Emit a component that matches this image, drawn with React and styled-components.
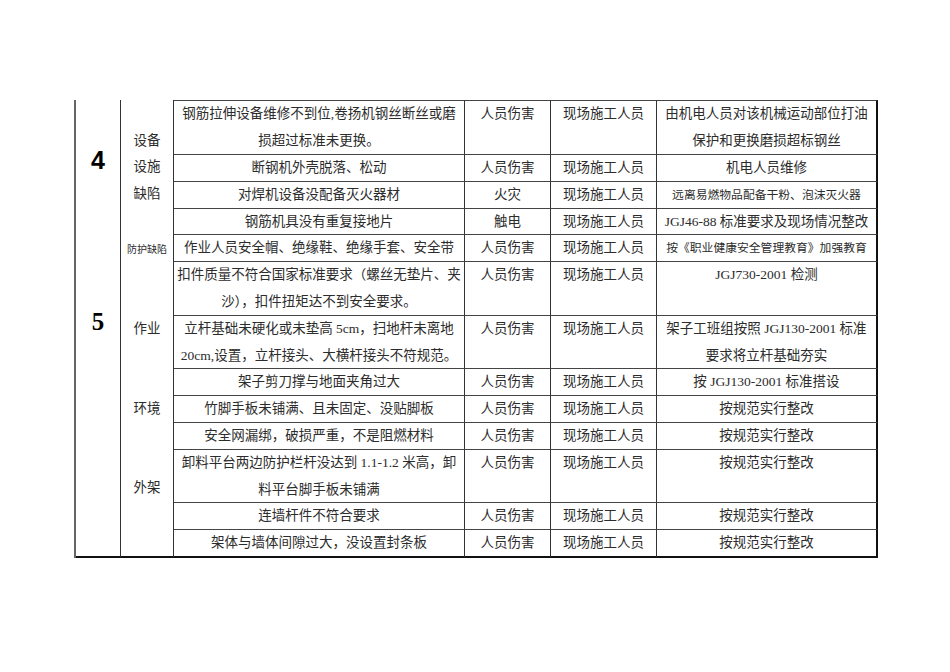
import React from 'react';
import styled, { createGlobalStyle } from 'styled-components';

const GlobalStyle = createGlobalStyle`
    html, body {
        margin: 0;
        padding: 0;
        background: #ffffff;
    }
    body {
        font-family: "Liberation Serif", "Noto Sans CJK SC", serif;
        color: #2c2c2c;
    }
`;

const rows = [
    { h: 55, issue: ['钢筋拉伸设备维修不到位,卷扬机钢丝断丝或磨', '损超过标准未更换。'], harm: '人员伤害', who: '现场施工人员', fix: ['由机电人员对该机械运动部位打油', '保护和更换磨损超标钢丝'] },
    { h: 27, issue: ['断钢机外壳脱落、松动'], harm: '人员伤害', who: '现场施工人员', fix: ['机电人员维修'] },
    { h: 27, issue: ['对焊机设备没配备灭火器材'], harm: '火灾', who: '现场施工人员', fix: ['远离易燃物品配备干粉、泡沫灭火器'], small: true },
    { h: 26, issue: ['钢筋机具没有重复接地片'], harm: '触电', who: '现场施工人员', fix: ['JGJ46-88 标准要求及现场情况整改'] },
    { h: 27, issue: ['作业人员安全帽、绝缘鞋、绝缘手套、安全带'], harm: '人员伤害', who: '现场施工人员', fix: ['按《职业健康安全管理教育》加强教育'], small: true },
    { h: 54, issue: ['扣件质量不符合国家标准要求（螺丝无垫片、夹', '沙），扣件扭矩达不到安全要求。'], harm: '人员伤害', who: '现场施工人员', fix: ['JGJ730-2001 检测'] },
    { h: 53, issue: ['立杆基础未硬化或未垫高 5cm，扫地杆未离地', '20cm,设置，立杆接头、大横杆接头不符规范。'], harm: '人员伤害', who: '现场施工人员', fix: ['架子工班组按照 JGJ130-2001 标准', '要求将立杆基础夯实'] },
    { h: 27, issue: ['架子剪刀撑与地面夹角过大'], harm: '人员伤害', who: '现场施工人员', fix: ['按 JGJ130-2001 标准搭设'] },
    { h: 27, issue: ['竹脚手板未铺满、且未固定、没贴脚板'], harm: '人员伤害', who: '现场施工人员', fix: ['按规范实行整改'] },
    { h: 27, issue: ['安全网漏绑，破损严重，不是阻燃材料'], harm: '人员伤害', who: '现场施工人员', fix: ['按规范实行整改'] },
    { h: 53, issue: ['卸料平台两边防护栏杆没达到 1.1-1.2 米高，卸', '料平台脚手板未铺满'], harm: '人员伤害', who: '现场施工人员', fix: ['按规范实行整改'] },
    { h: 27, issue: ['连墙杆件不符合要求'], harm: '人员伤害', who: '现场施工人员', fix: ['按规范实行整改'] },
    { h: 28, issue: ['架体与墙体间隙过大，没设置封条板'], harm: '人员伤害', who: '现场施工人员', fix: ['按规范实行整改'] },
];

const Lines = ({ lines }) => lines.map((l, i) => <Line key={i}>{l}</Line>);

const App = () => {
    const last = rows.length;
    return (
        <>
            <GlobalStyle />
            <Page>
                <Table $rows={rows.map((r) => `${r.h}px`).join(' ')}>
                    <NumCell $from={1} $to={6} $sans>4</NumCell>
                    <NumCell $from={6} $to={last + 1} $bottom>5</NumCell>

                    <GroupCell $from={1} $to={5}>
                        <Lines lines={['设备', '设施', '缺陷']} />
                    </GroupCell>
                    <GroupCell $from={5} $to={6} $small>防护缺陷</GroupCell>
                    <GroupCell $from={6} $to={last + 1} $bottom>
                        <Lines lines={['作业', '', '', '环境', '', '', '外架']} />
                    </GroupCell>

                    {rows.map((r, i) => (
                        <React.Fragment key={i}>
                            <Cell $row={i + 1} $col={3} $top={i === 0} $bottom={i === last - 1}>
                                <Lines lines={r.issue} />
                            </Cell>
                            <Cell $row={i + 1} $col={4} $top={i === 0} $bottom={i === last - 1}>
                                <Line>{r.harm}</Line>
                            </Cell>
                            <Cell $row={i + 1} $col={5} $top={i === 0} $bottom={i === last - 1}>
                                <Line>{r.who}</Line>
                            </Cell>
                            <Cell $row={i + 1} $col={6} $top={i === 0} $bottom={i === last - 1} $small={r.small} $edge>
                                <Lines lines={r.fix} />
                            </Cell>
                        </React.Fragment>
                    ))}
                </Table>
            </Page>
        </>
    );
};

const Page = styled.div`
    width: 950px;
    height: 672px;
    box-sizing: border-box;
    padding: 100px 0 0 74px;
`;

const Table = styled.div`
    display: grid;
    grid-template-columns: 45px 53px 291px 86px 106px 221px;
    grid-template-rows: ${({ $rows }) => $rows};
    width: max-content;
    border-left: 2px solid #666;
`;

const Cell = styled.div`
    grid-row: ${({ $row }) => $row};
    grid-column: ${({ $col }) => $col};
    box-sizing: border-box;
    border-top: ${({ $top }) => ($top ? '1px solid #444' : 'none')};
    border-bottom: ${({ $bottom }) => ($bottom ? '2px solid #111' : '1px solid #444')};
    border-right: ${({ $edge }) => ($edge ? '2px solid #111' : '1px solid #333')};
    display: flex;
    flex-direction: column;
    align-items: center;
    font-size: ${({ $small }) => ($small ? '11.8px' : '13.5px')};
    line-height: 26px;
    white-space: nowrap;
    overflow: hidden;
`;

const Line = styled.div`
    min-height: 26.5px;
    line-height: 26.5px;
    text-align: center;
`;

const NumCell = styled.div`
    grid-row: ${({ $from, $to }) => `${$from} / ${$to}`};
    grid-column: 1;
    box-sizing: border-box;
    border-right: 1px solid #333;
    border-bottom: ${({ $bottom }) => ($bottom ? '2px solid #111' : 'none')};
    padding-top: 45px;
    text-align: center;
    font-family: ${({ $sans }) => ($sans ? '"Liberation Sans", sans-serif' : '"Liberation Serif", serif')};
    font-weight: bold;
    font-size: 25px;
    line-height: 30px;
    color: #000;
`;

const GroupCell = styled.div`
    grid-row: ${({ $from, $to }) => `${$from} / ${$to}`};
    grid-column: 2;
    box-sizing: border-box;
    border-right: 1px solid #333;
    border-bottom: ${({ $bottom }) => ($bottom ? '2px solid #111' : 'none')};
    display: flex;
    flex-direction: column;
    align-items: center;
    justify-content: center;
    font-size: ${({ $small }) => ($small ? '10px' : '13.5px')};
    white-space: nowrap;
`;

export default App;
